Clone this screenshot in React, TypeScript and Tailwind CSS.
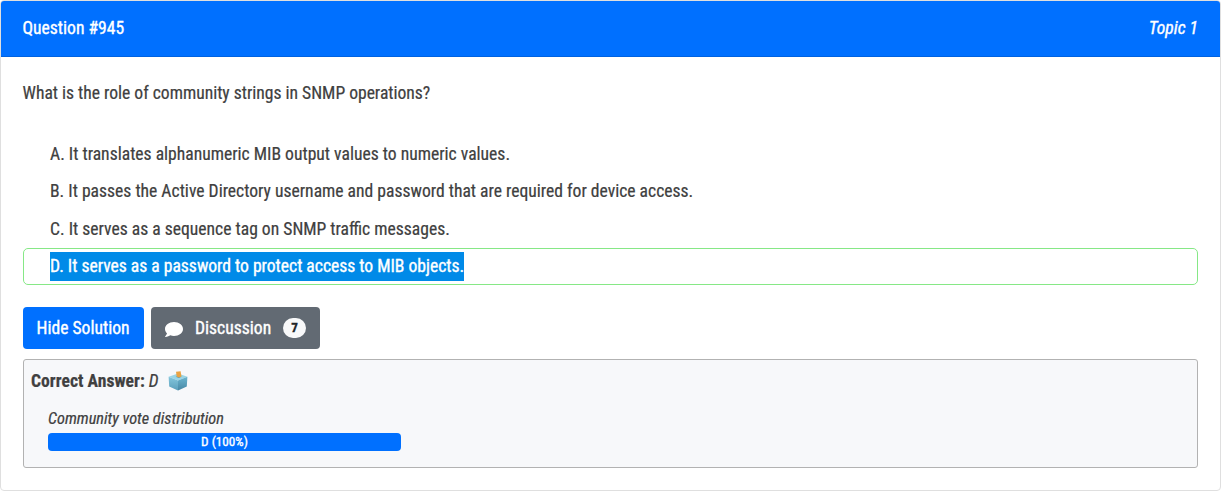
const choices = [
  "A. It translates alphanumeric MIB output values to numeric values.",
  "B. It passes the Active Directory username and password that are required for device access.",
  "C. It serves as a sequence tag on SNMP traffic messages.",
];

function CommentIcon() {
  return (
    <svg viewBox="0 32 512 448" preserveAspectRatio="none" className="mt-[2px] h-[15px] w-[18px] fill-white" aria-hidden="true">
      <path d="M256 32C114.600 32 0 125.100 0 240c0 49.600 21.400 95 57 130.700C44.500 421.100 2.700 466 2.200 466.500c-2.200 2.300-2.800 5.700-1.500 8.700S4.800 480 8 480c66.300 0 116-31.800 140.600-51.400 32.700 12.300 69 19.400 107.400 19.400 141.400 0 256-93.100 256-208S397.400 32 256 32z" />
    </svg>
  );
}

function BallotBoxIcon() {
  return (
    <svg viewBox="0 0 20 20" className="h-5 w-5" aria-hidden="true">
      <defs>
        <linearGradient id="left" x1="0" y1="0" x2="0" y2="1">
          <stop offset="0" stopColor="#84c6dc" />
          <stop offset="1" stopColor="#5a9fbc" />
        </linearGradient>
        <linearGradient id="right" x1="0" y1="0" x2="0" y2="1">
          <stop offset="0" stopColor="#6cb6d0" />
          <stop offset="1" stopColor="#4787a4" />
        </linearGradient>
      </defs>
      <path d="M.6 5.700 10 2.500l9.400 3.200L10 9.500z" fill="#9ad5e6" />
      <path d="M.6 5.700 10 9.500v10L1.200 15.400z" fill="url(#left)" />
      <path d="M19.400 5.700 10 9.500v10l8.800-4.100z" fill="url(#right)" />
      <path d="m7.600 5.700 3.200 1.200 2.800-1.200-2.800-.9z" fill="#6297a8" />
      <path d="m8 .8 4.600-.5.900 5.100-2.600 1.100-2.200-.9z" fill="#eaa343" />
    </svg>
  );
}

export default function App() {
  return (
    <main className="h-[491px] w-[1221px] overflow-hidden rounded-[4px] border border-[#dfdfdf] bg-white font-['Roboto_Condensed',Roboto,sans-serif] text-[17.6px] leading-[29px] text-[#404040] [-webkit-text-stroke:0.2px_currentColor]">
      <header className="flex h-14 items-center justify-between border-b border-[#0062e0] bg-[#0070ff] pr-[22px] pl-[21.500px] pb-px text-white [-webkit-text-stroke:0.35px_currentColor]">
        <span>Question #945</span>
        <span className="italic">Topic 1</span>
      </header>
      <div className="px-[22px] pt-[21.500px]">
        <p className="-ml-[0.500px] tracking-[-0.010px]">What is the role of community strings in SNMP operations?</p>
        <ul className="mt-[28px]">
          {choices.map((choice) => (
            <li key={choice} className="h-[37.500px] pt-[4px] pl-[27px]">{choice}</li>
          ))}
          <li className="flex h-[37px] items-center rounded-[5px] border border-[#86e886] pl-[26px]">
            <span className="bg-[#008ae8] tracking-[-0.010px] text-white [-webkit-text-stroke:0.35px_currentColor]">D. It serves as a password to protect access to MIB objects.</span>
          </li>
        </ul>
        <div className="mt-[22px] flex gap-[7px] text-white [-webkit-text-stroke:0.35px_currentColor]">
          <button className="h-[42px] w-[121px] rounded-[4px] bg-[#0070ff] pr-px">Hide Solution</button>
          <button className="flex h-[42px] w-[169px] items-center rounded-[4px] bg-[#626a73] pl-[14px]">
            <CommentIcon />
            <span className="ml-3">Discussion</span>
            <span className="ml-3 flex h-5 w-[23px] items-center justify-center rounded-full bg-[#f8f9fa] text-[13.200px] leading-none font-bold text-[#212529]">7</span>
          </button>
        </div>
        <section className="mt-[10px] h-[109px] rounded-[3px] border border-[#b2b2b2] bg-[#f7f8fa] px-[7px] pt-[7px]">
          <div className="flex items-center">
            <strong className="font-bold tracking-[0.040px]">Correct Answer:</strong>
            <span className="ml-1 italic">D</span>
            <span className="mb-px ml-[9px]"><BallotBoxIcon /></span>
          </div>
          <div className="mt-[11px] ml-[17px] w-[353px]">
            <p className="text-[16.300px] leading-[24px] italic">Community vote distribution</p>
            <div className="mt-[2px] h-[18px] rounded-[4px] bg-[#0070ff] text-center text-[13.200px] leading-[18px] text-white [-webkit-text-stroke:0.35px_currentColor]">D (100%)</div>
          </div>
        </section>
      </div>
    </main>
  );
}
